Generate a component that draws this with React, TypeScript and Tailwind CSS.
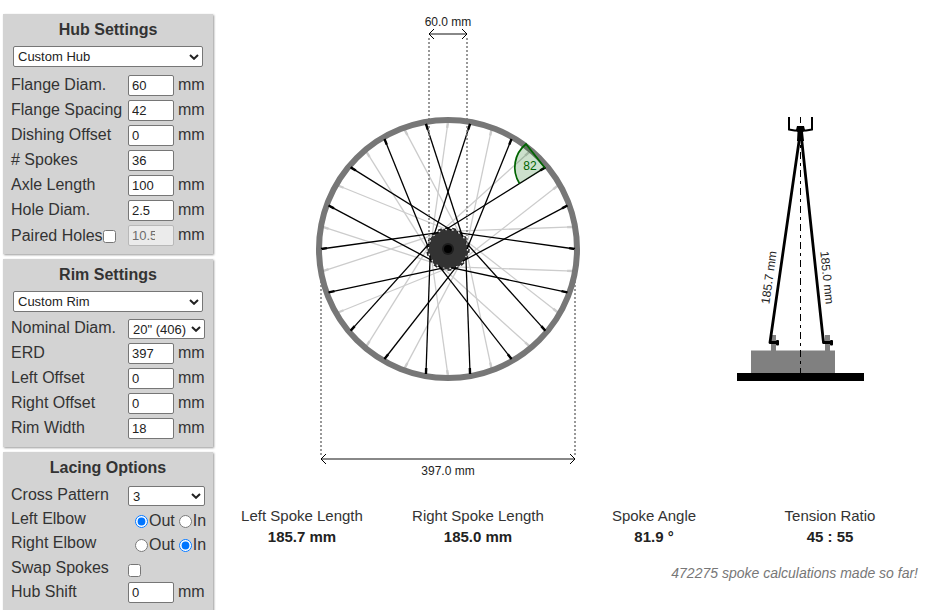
import { useState, type ReactNode } from "react";

const RIM_RADIUS = 127;
const FLANGE_RADIUS = 19;
const SPOKES = 36;

// angle is in degrees, clockwise from the top of the wheel
function polar(radius: number, angle: number) {
  const rad = (angle * Math.PI) / 180;
  return { x: radius * Math.sin(rad), y: -radius * Math.cos(rad) };
}

function Spoke({ index, color }: { index: number; color: string }) {
  const rimAngle = (index * 360) / SPOKES;
  const leading = index % 4 === 2 || index % 4 === 3;
  const hub = polar(FLANGE_RADIUS, rimAngle + (leading ? 60 : -60));
  const rim = polar(RIM_RADIUS, rimAngle);
  const length = Math.hypot(hub.x - rim.x, hub.y - rim.y);
  const nipple = {
    x: rim.x + ((hub.x - rim.x) * 6) / length,
    y: rim.y + ((hub.y - rim.y) * 6) / length,
  };

  return (
    <g stroke={color}>
      <line x1={rim.x} y1={rim.y} x2={hub.x} y2={hub.y} strokeWidth="1.3" />
      <line x1={rim.x} y1={rim.y} x2={nipple.x} y2={nipple.y} strokeWidth="2.4" />
    </g>
  );
}

function Dimension({ y, from, half }: { y: number; from: number; half: number }) {
  const side = y < from ? 4 : -4;
  return (
    <g fill="none" stroke="#000">
      <g stroke="#777" strokeWidth="1.5" strokeDasharray="2 2">
        <line x1={-half} y1={y + side} x2={-half} y2={from} />
        <line x1={half} y1={y + side} x2={half} y2={from} />
      </g>
      <line x1={-half} y1={y} x2={half} y2={y} stroke="#888" strokeWidth="2" />
      <path d={`M${-half + 5} ${y - 5}L${-half} ${y}L${-half + 5} ${y + 5}`} />
      <path d={`M${half - 5} ${y - 5}L${half} ${y}L${half - 5} ${y + 5}`} />
    </g>
  );
}

function WheelDiagram() {
  const indexes = Array.from({ length: SPOKES }, (_, i) => i);

  return (
    <svg width="300" height="490" viewBox="-150 -249 300 490" role="img" aria-label="Wheel">
      {indexes
        .filter((i) => i % 2 === 0)
        .map((i) => (
          <Spoke key={i} index={i} color="#ccc" />
        ))}
      <circle r="129" fill="none" stroke="#777" strokeWidth="6" />
      <circle r="20.5" fill="#333" />
      <circle r="21" fill="none" stroke="#222" strokeWidth="1.5" strokeDasharray="4 3.33" />
      <circle r="6" fill="#1c1c1c" />
      <circle r="4" fill="#000" />
      {indexes
        .filter((i) => i % 2 === 1)
        .map((i) => (
          <Spoke key={i} index={i} color="#000" />
        ))}
      <circle r="19.5" fill="none" stroke="#eee" strokeWidth="1.2" strokeDasharray="1.8 5" />
      <Dimension y={-215} from={-4} half={19} />
      <Dimension y={210} from={0} half={127} />
      <path d="M97 -81L78 -105A30 30 0 0 0 71.5 -65.5Z" fill="#006400" fillOpacity="0.2" />
      <path
        d="M97 -81L78 -105A30 30 0 0 0 71.5 -65.5"
        fill="none"
        stroke="#006400"
        strokeWidth="1.7"
      />
      <g fontSize="12" textAnchor="middle" fill="#222">
        <text x="0" y="-223">
          60.0 mm
        </text>
        <text x="0" y="226">
          397.0 mm
        </text>
        <text x="82" y="-79" fill="#006400">
          82
        </text>
      </g>
    </svg>
  );
}

function SideDiagram() {
  return (
    <svg width="140" height="490" viewBox="-71 0 140 490" role="img" aria-label="Wheel cross section">
      <rect x="-49" y="350.5" width="84" height="23" fill="#808080" />
      <rect x="-29" y="335" width="5" height="16" fill="#808080" />
      <rect x="25" y="335" width="5" height="16" fill="#808080" />
      <rect x="-63" y="373" width="127" height="8" />
      <path d="M-11 117V129.5Q0 132 12 129.5V117" fill="none" stroke="#000" strokeWidth="2" />
      <path d="M-3 126H4L5 130L3 132L4 141H-3L-2.5 132L-4 130Z" />
      <g fill="none" stroke="#000" strokeWidth="2.8" strokeLinejoin="round">
        <path d="M-0.5 138L-30 342.5H-23" />
        <path d="M1.5 138L23.5 342.5H31" />
      </g>
      <rect x="-24" y="340" width="3" height="5.5" rx="1" />
      <rect x="30" y="340" width="3" height="5.5" rx="1" />
      <line
        x1="0.5"
        y1="117"
        x2="0.5"
        y2="373"
        stroke="#000"
        strokeDasharray="7 4 3 4"
        strokeDashoffset="1"
      />
      <g fontSize="12" textAnchor="middle" fill="#222">
        <text transform="translate(-27 278) rotate(-82)">185.7 mm</text>
        <text transform="translate(23 278) rotate(84)">185.0 mm</text>
      </g>
    </svg>
  );
}

function Panel({ title, children }: { title: string; children: ReactNode }) {
  return (
    <section className="bg-[#d3d3d3] pt-1 pb-1.5 pl-2 shadow-[1px_1px_2px_#999]">
      <h2 className="pr-2 text-center font-bold leading-6">{title}</h2>
      {children}
    </section>
  );
}

function Chevron() {
  return (
    <svg
      width="10"
      height="6"
      viewBox="0 0 10 6"
      className="absolute right-1 top-1/2 -translate-y-1/2 pointer-events-none"
      aria-hidden="true"
    >
      <path d="M1 1L5 4.8L9 1" fill="none" stroke="#222" strokeWidth="2" />
    </svg>
  );
}

function PresetSelect({ label, option }: { label: string; option: string }) {
  return (
    <div className="relative w-[190px] mt-1 mb-1.5 mx-0.5">
      <select
        aria-label={label}
        className="appearance-none block w-full h-[21px] px-1 text-[13px] text-[#222] bg-white border border-[#767676] rounded-xs"
      >
        <option>{option}</option>
      </select>
      <Chevron />
    </div>
  );
}

type NumberRowProps = {
  id: string;
  label: string;
  value: string;
  unit?: string;
};

function NumberRow({ id, label, value, unit = "mm" }: NumberRowProps) {
  return (
    <div className="flex h-[25px] items-start">
      <label htmlFor={id} className="w-[117px] leading-6">
        {label}
      </label>
      <NumberInput id={id} value={value} />
      <span className="ml-1 leading-6">{unit}</span>
    </div>
  );
}

function NumberInput({ id, value, disabled }: { id: string; value: string; disabled?: boolean }) {
  return (
    <input
      id={id}
      type="number"
      step="any"
      defaultValue={value}
      disabled={disabled}
      className="w-[46px] h-[21px] mt-0.5 px-[3px] text-[13px] text-[#222] bg-white border border-[#767676] rounded-xs disabled:bg-[#ebebeb] disabled:text-[#6d6d6d] disabled:border-[#b8b8b8]"
    />
  );
}

function SelectRow({ id, label, option }: { id: string; label: string; option: string }) {
  return (
    <div className="flex h-[23px] items-start">
      <label htmlFor={id} className="w-[117px] leading-5">
        {label}
      </label>
      <div className="relative w-[77px] mt-px">
        <select
          id={id}
          className="appearance-none block w-full h-5 px-1 text-[13px] text-[#222] bg-white border border-[#767676] rounded-xs"
        >
          <option>{option}</option>
        </select>
        <Chevron />
      </div>
    </div>
  );
}

function ElbowRow({ name, label, initial }: { name: string; label: string; initial: string }) {
  const [elbow, setElbow] = useState(initial);

  return (
    <fieldset className="flex h-6 items-start">
      <legend className="float-left w-[124px] leading-[22px]">{label}</legend>
      {["Out", "In"].map((option) => (
        <label key={option} className="flex items-center mt-[3px] mr-1 leading-5">
          <input
            type="radio"
            name={name}
            value={option}
            checked={elbow === option}
            onChange={() => setElbow(option)}
            className="size-[13px] mr-px"
          />
          {option}
        </label>
      ))}
    </fieldset>
  );
}

const results = [
  { label: "Left Spoke Length", value: "185.7 mm" },
  { label: "Right Spoke Length", value: "185.0 mm" },
  { label: "Spoke Angle", value: "81.9 °" },
  { label: "Tension Ratio", value: "45 : 55" },
];

export default function App() {
  const [paired, setPaired] = useState(false);

  return (
    <div className="flex items-start bg-white text-[#333] text-base font-['Liberation_Sans',Arial,sans-serif]">
      <aside className="w-[210px] shrink-0 ml-[3px] mr-px mt-3.5 space-y-[5px]">
        <Panel title="Hub Settings">
          <PresetSelect label="Hub preset" option="Custom Hub" />
          <NumberRow id="flange-diam" label="Flange Diam." value="60" />
          <NumberRow id="flange-spacing" label="Flange Spacing" value="42" />
          <NumberRow id="dishing-offset" label="Dishing Offset" value="0" />
          <NumberRow id="spokes" label="# Spokes" value="36" unit="" />
          <NumberRow id="axle-length" label="Axle Length" value="100" />
          <NumberRow id="hole-diam" label="Hole Diam." value="2.5" />
          <div className="flex h-[25px] items-start">
            <label className="flex items-center w-[117px] mt-[3px] leading-5">
              Paired Holes
              <input
                type="checkbox"
                checked={paired}
                onChange={(e) => setPaired(e.target.checked)}
                className="size-[13px]"
              />
            </label>
            <NumberInput id="paired-distance" value="10.5" disabled={!paired} />
            <label htmlFor="paired-distance" className="ml-1 leading-6">
              mm
            </label>
          </div>
        </Panel>

        <Panel title="Rim Settings">
          <PresetSelect label="Rim preset" option="Custom Rim" />
          <SelectRow id="nominal-diam" label="Nominal Diam." option={'20" (406)'} />
          <NumberRow id="erd" label="ERD" value="397" />
          <NumberRow id="left-offset" label="Left Offset" value="0" />
          <NumberRow id="right-offset" label="Right Offset" value="0" />
          <NumberRow id="rim-width" label="Rim Width" value="18" />
        </Panel>

        <Panel title="Lacing Options">
          <div className="mt-[5px]">
            <SelectRow id="cross-pattern" label="Cross Pattern" option="3" />
            <ElbowRow name="left-elbow" label="Left Elbow" initial="Out" />
            <ElbowRow name="right-elbow" label="Right Elbow" initial="In" />
            <div className="flex h-6 items-start">
              <label htmlFor="swap-spokes" className="w-[117px] leading-6">
                Swap Spokes
              </label>
              <input id="swap-spokes" type="checkbox" className="size-[13px] mt-2" />
            </div>
            <NumberRow id="hub-shift" label="Hub Shift" value="0" />
          </div>
        </Panel>
      </aside>

      <main className="flex-1 pr-2.5">
        <div className="grid grid-cols-3 mr-0.5">
          <div className="col-span-2 flex justify-center">
            <WheelDiagram />
          </div>
          <div className="flex justify-center">
            <SideDiagram />
          </div>
        </div>
        <dl className="grid grid-cols-4 mt-4 text-center text-[15px] leading-5">
          {results.map(({ label, value }) => (
            <div key={label}>
              <dt>{label}</dt>
              <dd className="mt-px font-bold text-[#222]">{value}</dd>
            </div>
          ))}
        </dl>
        <p className="mt-4 text-right text-sm italic text-[#777]">
          472275 spoke calculations made so far!
        </p>
      </main>
    </div>
  );
}
